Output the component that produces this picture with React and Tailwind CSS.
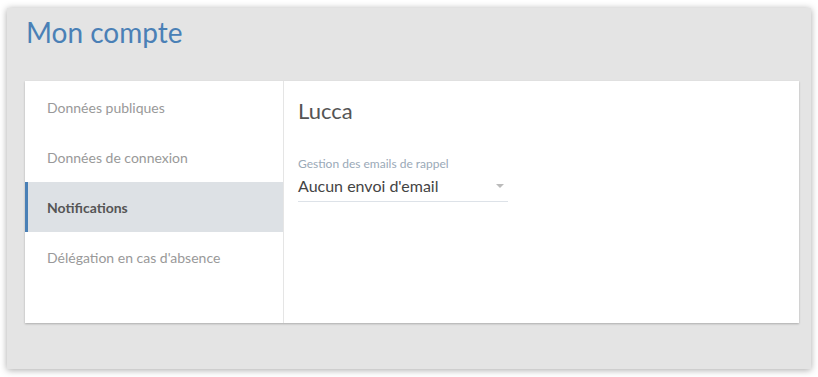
import React, { useState } from "react";

const menu = [
  "Données publiques",
  "Données de connexion",
  "Notifications",
  "Délégation en cas d'absence",
];

export default function App() {
  const [active, setActive] = useState(2);

  return (
    <div className="w-[818px] h-[377px] bg-white pt-[8px] pl-[7px] font-['Lato',sans-serif]">
      <div className="w-[804px] h-[361px] bg-[#e4e4e4] shadow-[0_1px_7px_rgba(0,0,0,0.35)] pt-[10px] pl-[18px] pr-[12px]">
        <h1 className="text-[28px] leading-[28px] text-[#4a80b6] pl-[1px] h-[63px]">Mon compte</h1>
        <div className="flex h-[242px] bg-white shadow-[0_1px_2px_rgba(0,0,0,0.25)]">
          <ul className="w-[259px] border-r border-[#e5e5e5] pt-[1px]">
            {menu.map((item, i) => (
              <li
                key={item}
                onClick={() => setActive(i)}
                className={
                  i === active
                    ? "h-[50px] flex items-center pl-[19px] border-l-[3px] border-[#4a80b6] bg-[#dde1e5] text-[14px] font-bold text-[#555]"
                    : "h-[50px] flex items-center pl-[22px] text-[14px] text-[#999] cursor-pointer"
                }
              >
                {item}
              </li>
            ))}
          </ul>
          <div className="flex-1 pl-[14px] pt-[16px]">
            <h2 className="text-[22px] leading-[28px] text-[#555]">Lucca</h2>
            <div className="mt-[32px] w-[210px]">
              <label className="block text-[12px] leading-[14px] text-[#9aa9b7]">Gestion des emails de rappel</label>
              <div className="flex items-center justify-between h-[31px] border-b border-[#dde2e8] pr-[4px]">
                <span className="text-[16px] text-[#444]">Aucun envoi d'email</span>
                <span className="w-0 h-0 border-l-[4px] border-r-[4px] border-t-[4px] border-l-transparent border-r-transparent border-t-[#bbb]"></span>
              </div>
            </div>
          </div>
        </div>
      </div>
    </div>
  );
}
